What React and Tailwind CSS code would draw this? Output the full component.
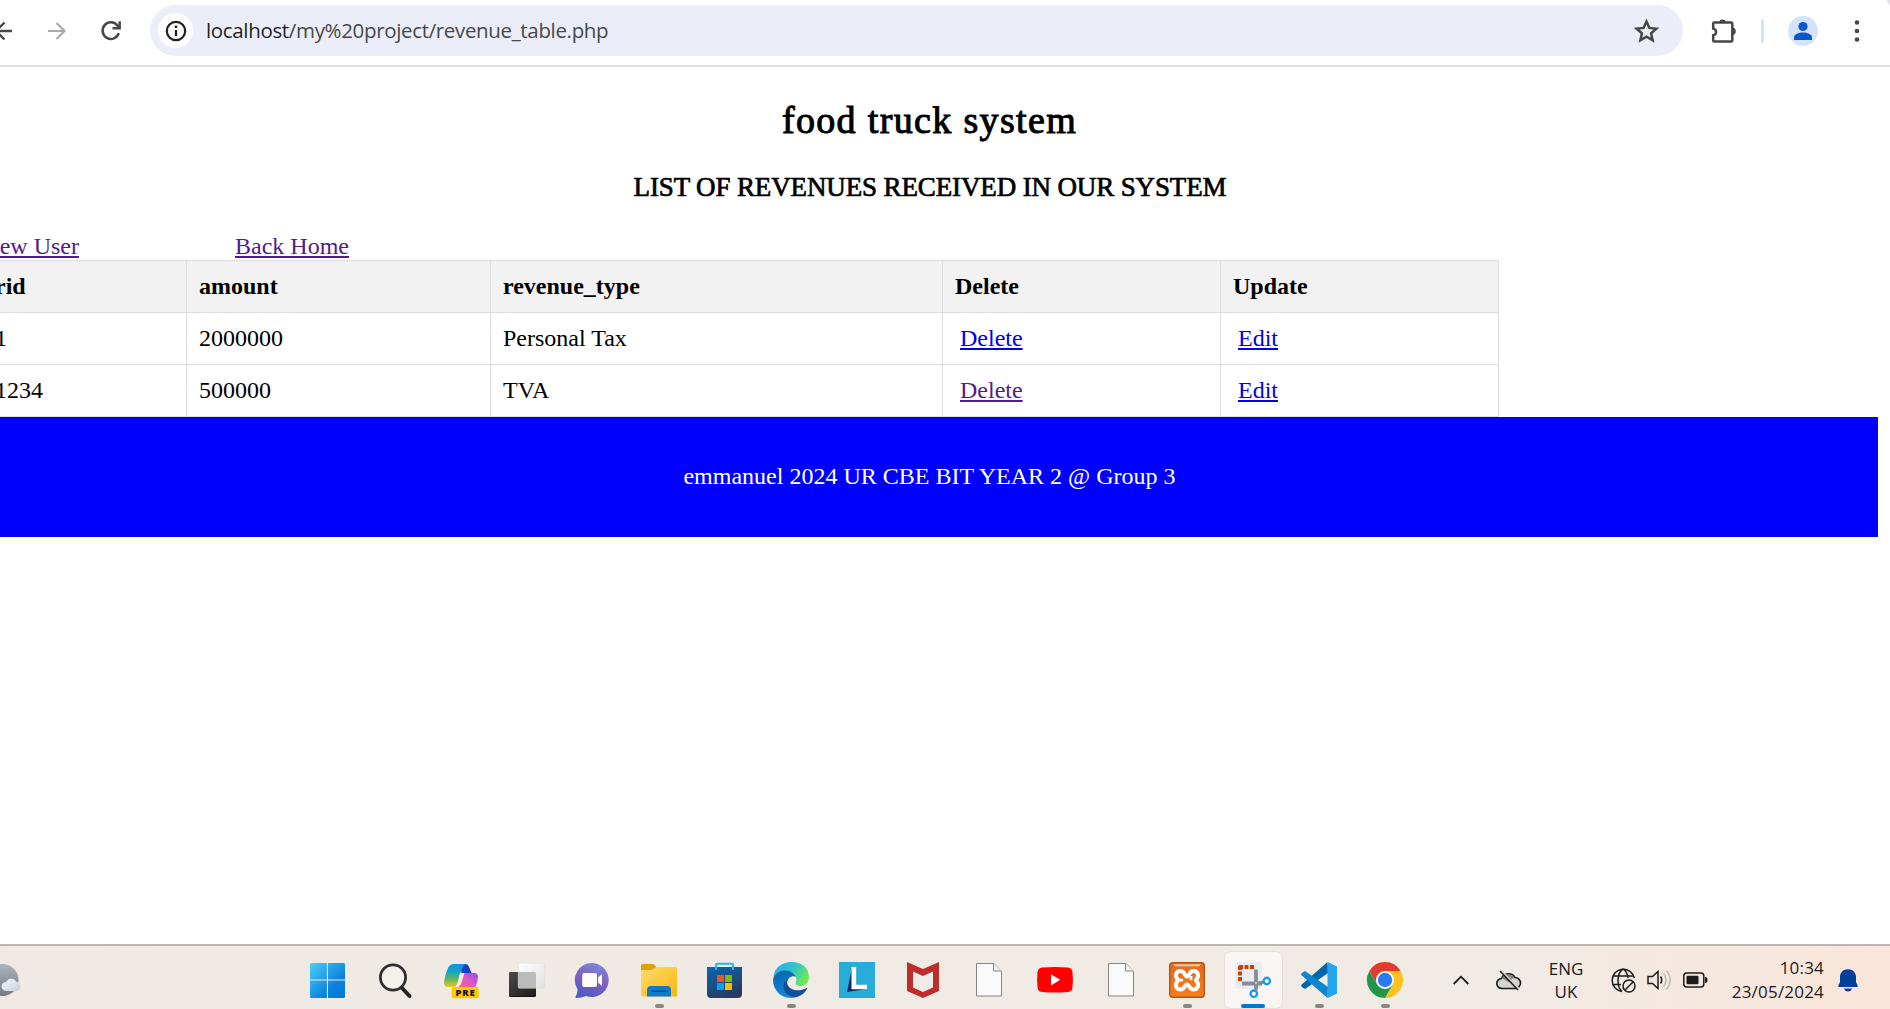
import React from "react";

const Svg = ({ children, className = "", ...p }) => (
  <svg className={"block shrink-0 overflow-visible " + className} fill="none" {...p}>{children}</svg>
);

function Toolbar() {
  return (
    <header className="relative flex h-[67px] items-start border-b-2 border-[#dfdfdf] bg-white">
      <div className="flex h-[61px] w-[150px] shrink-0 items-center">
        <Svg width="16" height="22" viewBox="0 0 16 22" stroke="#474747" strokeWidth="2.3">
          <path d="M12 11H-5M4.500 2.500L-4 11l8.500 8.500" />
        </Svg>
        <Svg className="ml-8" width="18" height="18" viewBox="0 0 18 18" stroke="#ababab" strokeWidth="2.2">
          <path d="M0 9H16M8.500 1l8 8-8 8" />
        </Svg>
        <Svg className="ml-[35px]" width="20" height="20" viewBox="0 0 20 20" stroke="#474747" strokeWidth="2.5">
          <path d="M17.800 12.200A8.300 8.300 0 1 1 16.500 4.600L18 6.200" />
          <path d="M18.700 0.300V7.300H11.500" strokeWidth="2.400" />
        </Svg>
      </div>
      <div className="mt-[5px] flex h-[51px] w-[1533px] shrink-0 items-center rounded-full bg-[#ebeef8] pl-2 pr-6">
        <span className="flex size-[35px] items-center justify-center rounded-full bg-white">
          <Svg width="22" height="22" viewBox="0 0 22 22">
            <circle cx="11" cy="11" r="9.200" stroke="#1f1f1f" strokeWidth="2.200" />
            <path d="M11 10v6" stroke="#1f1f1f" strokeWidth="2.300" />
            <circle cx="11" cy="6.800" r="1.400" fill="#1f1f1f" />
          </Svg>
        </span>
        <span className="ml-[13px] whitespace-nowrap font-['Open_Sans',sans-serif] text-[20.500px] tracking-[-0.340px] text-[#474747]">
          <span className="text-[#1f1f1f]">localhost</span>/my%20project/revenue_table.php
        </span>
        <Svg className="ml-auto" width="25" height="24" viewBox="0 0 25 24">
          <path d="M12.500 2.500l2.900 6.400 7 .7-5.300 4.700 1.500 6.900-6.100-3.600-6.100 3.600 1.500-6.900L2.600 9.600l7-.7z" stroke="#474747" strokeWidth="2.500" />
        </Svg>
      </div>
      <div className="flex h-[61px] items-center">
        <Svg className="ml-7" width="26" height="26" viewBox="0 0 26 26">
          <path d="M3 4.500H20.300Q21.300 4.500 21.300 5.500V22.500Q21.300 23.500 20.300 23.500H3.200Q2.200 23.500 2.200 22.500V17.300C6 16.500 6 11.500 2.200 10.500V5.500Q2.200 4.500 3 4.500Z" stroke="#474747" strokeWidth="2.500" />
          <path d="M8 4a3.600 3.200 0 0 1 7 0zM22 9.500a3.300 3.800 0 0 1 0 7.500z" fill="#474747" />
        </Svg>
        <span className="ml-6 h-6 w-[3px] rounded bg-[#d3e3fd]" />
        <Svg className="ml-6" width="30" height="30" viewBox="0 0 30 30">
          <circle cx="15" cy="15" r="15" fill="#d3e3fd" />
          <circle cx="15" cy="10.500" r="4.600" fill="#0b57d0" />
          <path d="M6 24v-2.500c0-3.500 5-5 9-5s9 1.500 9 5V24z" fill="#0b57d0" />
        </Svg>
        <Svg className="ml-9" width="6" height="22" viewBox="0 0 6 22">
          <g fill="#474747"><circle cx="3" cy="2.500" r="2.300" /><circle cx="3" cy="11" r="2.300" /><circle cx="3" cy="19.500" r="2.300" /></g>
        </Svg>
      </div>
      <Svg className="absolute right-0 top-0" width="4" height="7" viewBox="0 0 4 7"><path d="M0 0h4v7Q3 2 0 0z" fill="#dfe1e6" /></Svg>
    </header>
  );
}

const rows = [
  { id: "1", amount: "2000000", type: "Personal Tax", visited: false },
  { id: "1234", amount: "500000", type: "TVA", visited: true },
];
const cell = "border border-[#dddddd] p-0 pb-[2px] pl-3 text-left";

function Page() {
  return (
    <main className="h-[877px] overflow-hidden bg-white font-['Liberation_Serif',serif] text-[24px] leading-[28px] text-black">
      <h1 className="mr-[31px] mt-[31px] text-center text-[38px] leading-[44px] tracking-[1.35px] [-webkit-text-stroke:1px_black]">food truck system</h1>
      <h2 className="mr-[30px] mt-[30px] text-center text-[27px] leading-[30px] tracking-[-0.130px] [-webkit-text-stroke:0.7px_black]">LIST OF REVENUES RECEIVED IN OUR SYSTEM</h2>
      <nav className="mt-[30px] flex h-[28px] text-[#551a8b]">
        <span className="flex w-[79px] justify-end whitespace-nowrap"><a className="underline decoration-2 underline-offset-2">New User</a></span>
        <a className="ml-[156px] underline decoration-2 underline-offset-2">Back Home</a>
      </nav>
      <table className="-ml-[18px] w-[1517px] table-fixed border-collapse">
        <colgroup><col className="w-[204px]" /><col className="w-[304px]" /><col className="w-[452px]" /><col className="w-[278px]" /><col className="w-[278px]" /></colgroup>
        <thead>
          <tr className="h-[52px] bg-[#f2f2f2]">
            {["rid", "amount", "revenue_type", "Delete", "Update"].map((h) => <th key={h} className={cell + " font-bold"}>{h}</th>)}
          </tr>
        </thead>
        <tbody>
          {rows.map((r) => (
            <tr key={r.id} className="h-[52px]">
              <td className={cell}>{r.id}</td>
              <td className={cell}>{r.amount}</td>
              <td className={cell}>{r.type}</td>
              <td className={cell}><a className={"ml-[5px] underline decoration-2 underline-offset-2 " + (r.visited ? "text-[#551a8b]" : "text-[#0000ee]")}>Delete</a></td>
              <td className={cell}><a className="ml-[5px] text-[#0000ee] underline decoration-2 underline-offset-2">Edit</a></td>
            </tr>
          ))}
        </tbody>
      </table>
      <footer className="mr-3 flex h-[120px] items-center justify-center bg-[#0000ff] pb-[2px] text-white">
        <p className="ml-[-19px]">emmanuel 2024 UR CBE BIT YEAR 2 @ Group 3</p>
      </footer>
    </main>
  );
}

const Doc = () => (
  <>
    <path d="M5.500 1.500h17.500l7.500 8v24.500h-25z" fill="#fafafa" stroke="#858585" />
    <path d="M22.500 1.500v7.500h8" fill="#f2f2f2" stroke="#858585" />
  </>
);

const icons = [
  { name: "start", art: <>
    <defs><linearGradient id="win" x1="-1" y1="1" x2="34" y2="36" gradientUnits="userSpaceOnUse"><stop stopColor="#4ccfff" /><stop offset=".65" stopColor="#0c83dc" /><stop offset="1" stopColor="#0078d4" /></linearGradient></defs>
    <path d="M.5 1H15.900V17.400H-1V2.500Q-1 1 .5 1zM17 1H32.500Q34 1 34 2.500V17.400H17zM-1 18.500H15.900V36H.5Q-1 36-1 34.500zM17 18.500H34V34.500Q34 36 32.500 36H17z" fill="url(#win)" />
  </> },
  { name: "search", art: <>
    <circle cx="16" cy="15.500" r="12.600" fill="#f4f1ed" stroke="#303030" strokeWidth="2.800" />
    <path d="M25 26l7.500 8" stroke="#252525" strokeWidth="4" strokeLinecap="round" />
  </> },
  { name: "copilot", art: <>
    <defs>
      <linearGradient id="cp1" x1="0" y1="0" x2="0" y2="1"><stop stopColor="#1490e8" /><stop offset=".35" stopColor="#16a5c4" /><stop offset=".65" stopColor="#5cb85f" /><stop offset="1" stopColor="#f5c518" /></linearGradient>
      <linearGradient id="cp2" x1="1" y1="0" x2="0" y2="1"><stop stopColor="#8d4cf0" /><stop offset=".5" stopColor="#df59c6" /><stop offset="1" stopColor="#ff7046" /></linearGradient>
    </defs>
    <path d="M17 2h5q3 0 4 3l2.500 6h-10z" fill="#1440c8" />
    <path d="M11 2h12q-3.500 1.500-4.500 6L14 22q-1 3-4 3H5q-4 0-4-5Q2 12 5 6 7 2 11 2z" fill="url(#cp1)" />
    <path d="M20 11h11q4 0 4 4-.5 6-3 11h-18q2-.5 3-4z" fill="url(#cp2)" />
    <path d="M17 11h4.500l-3.500 11q-1 2-3 2h-2q1-1 1.500-3z" fill="#f3eeea" />
    <rect x="8.700" y="25" width="27" height="11.200" rx="2" fill="#ffc800" />
    <text x="22.600" y="33.800" textAnchor="middle" fill="#161616" className="font-['Open_Sans',sans-serif] text-[9.500px] font-extrabold tracking-[.8px]">PRE</text>
  </> },
  { name: "taskview", art: <>
    <defs><linearGradient id="tv" x1="0" y1="0" x2="1" y2="1"><stop stopColor="#4a4a4a" /><stop offset="1" stopColor="#1c1c1c" /></linearGradient><linearGradient id="tw" x1="0" y1="0" x2="1" y2="1"><stop stopColor="#fff" /><stop offset="1" stopColor="#e2e2e5" /></linearGradient></defs>
    <rect y="10" width="27" height="25" rx="1.500" fill="#151515" /><rect y="10" width="27" height="24" rx="1.500" fill="url(#tv)" />
    <rect x="9.200" y="1.200" width="26.500" height="25" rx="1.500" fill="url(#tw)" stroke="#d8d7d9" strokeWidth=".5" />
    <path d="M9 10h16.500q1.500 0 1.500 1.500V26H10.500q-1.500 0-1.500-1.500z" fill="#bcbcbc" />
  </> },
  { name: "chat", art: <>
    <defs><linearGradient id="ch" x1=".75" y1="0" x2=".4" y2="1"><stop stopColor="#7390e5" /><stop offset=".45" stopColor="#8263b8" /><stop offset="1" stopColor="#5059c9" /></linearGradient></defs>
    <path d="M17.500 1A17 17 0 1 1 11 34Q7 36 1 36 0 35 .8 34 2.500 32 2.500 27A17 17 0 0 1 17.500 1z" fill="url(#ch)" />
    <rect x="7.200" y="11" width="14.800" height="14" rx="2" fill="#fff" /><path d="M23 15.500l4-3.500v12l-4-3.500z" fill="#fff" />
  </> },
  { name: "files", run: true, art: <>
    <defs><linearGradient id="fo" x1="0" y1="0" x2="1" y2="1"><stop stopColor="#ffdc70" /><stop offset="1" stopColor="#fbb70a" /></linearGradient></defs>
    <path d="M0 3.500Q0 2 1.500 2H11q1.500 0 2.500 1l2 2-4 4H0z" fill="#dfa00c" />
    <path d="M0 9.500q0-1.500 1.500-1.500H9q2 0 4-1.500l1-.5q1-1 2.500-1h18q1.500 0 1.500 1.500V34.500H1.500Q0 34.500 0 33z" fill="url(#fo)" />
    <path d="M6 34.500V28q0-4 4-4h16q4 0 4 4v6.500z" fill="#1279c6" /><path d="M11 29.200h14" stroke="#074d92" strokeWidth="1.500" strokeLinecap="round" />
  </> },
  { name: "store", art: <>
    <defs><linearGradient id="st" x1="0" y1="0" x2=".5" y2="1"><stop stopColor="#0a66b3" /><stop offset="1" stopColor="#263b61" /></linearGradient></defs>
    <path d="M0 5h35v27q0 4-4 4H4q-4 0-4-4z" fill="url(#st)" />
    <path d="M9 8V3q0-1.200 1.200-1.200h14.600Q26 1.800 26 3v5" stroke="#22b7ee" strokeWidth="2" /><path d="M10 3h15v2H10z" fill="#eef3f5" />
    <path d="M10 13h7v7h-7z" fill="#f25022" /><path d="M18 13h7v7h-7z" fill="#7fba00" /><path d="M10 21h7v7h-7z" fill="#00a4ef" /><path d="M18 21h7v7h-7z" fill="#ffb900" />
  </> },
  { name: "edge", run: true, art: <>
    <defs><linearGradient id="eg" x1="0" y1=".2" x2="1" y2=".6"><stop stopColor="#2bb0ee" /><stop offset=".5" stopColor="#2fc3cf" /><stop offset="1" stopColor="#72ea50" /></linearGradient><linearGradient id="eb" x1=".2" y1="0" x2=".4" y2="1"><stop stopColor="#0b64a8" /><stop offset="1" stopColor="#1389e2" /></linearGradient></defs>
    <path d="M.5 15C2-5 36-5 36 15c0 6-4 9-8.500 9-3 0-5-1-5-2.500 0-1 1-2 1-4C23.500 13 19 9 13 9 7 9 3 11 .5 15z" fill="url(#eg)" />
    <path d="M0 18C1 11 7 8.500 12 8.500c6 0 10 3.500 11.500 7-2-2.500-9-1.500-9.500 5.500-.4 6 4 12 10 14C10 39 0 29 0 18z" fill="url(#eb)" />
    <path d="M15.500 16.500C5 23 12 36 24 35c5-1.500 8-4.500 10-8 .3-1-.5-1.200-1-.8C24 31 14 27 14 20q0-2 1.500-3.500z" fill="#124f98" />
  </> },
  { name: "l", art: <>
    <path d="M0 0h36v36H0z" fill="#28add8" /><path d="M13 6L8 30l20-3-14-4z" fill="#0a2b64" /><path d="M12.500 5h4.700v17.700H28v4.600H12.500z" fill="#fff" />
  </> },
  { name: "mcafee", art: <path fillRule="evenodd" d="M2 0l16 7L34 0v29L18 36 2 29zM8 9.500v16L18 30l10-4.500v-16L18 14z" fill="#bd2d2b" /> },
  { name: "doc1", art: <Doc /> },
  { name: "youtube", art: <>
    <path d="M5 5.500q13-1 26 0 4 .5 4.500 4.500.8 8 0 15.500-.5 4-4.500 4.500-13 1-26 0-4-.5-4.500-4.500-.8-7.500 0-15.500Q1 6 5 5.500z" fill="#f00" /><path d="M14 12.200v11.200l9.300-5.600z" fill="#fff" />
  </> },
  { name: "doc2", art: <Doc /> },
  { name: "xampp", run: true, art: <>
    <defs><linearGradient id="xa" x1="0" y1="0" x2="0" y2="1"><stop stopColor="#dc6b22" /><stop offset="1" stopColor="#fb7d1c" /></linearGradient></defs>
    <rect x=".7" y=".7" width="34.600" height="34.600" rx="3" fill="url(#xa)" stroke="#b9530f" strokeWidth="1.400" /><path d="M4 2h28l-2 2.500H6z" fill="#f3b991" />
    <path d="M18 14.500C15.500 14.500 16 9 11.500 9 7 9 5.500 14 8.500 17.200q1 1 0 2C5.500 22.500 7 27.500 11.500 27.500c4.500 0 4-5 6.500-5s2 5 6.500 5 6-5 3-8.300q-1-1 0-2C30.500 14 29 9 24.500 9 20 9 20.500 14.500 18 14.500z" stroke="#fff" strokeWidth="4" strokeLinejoin="round" />
    <path d="M8.500 18.200H14M22 14v4.200" stroke="#fff" strokeWidth="2.800" />
  </> },
  { name: "snip", active: true, art: <>
    <rect x="0" y="0" width="27" height="27" rx="3" fill="#e8edf1" />
    <path d="M5 3h3v4H7v1H3V5q0-2 2-2zM9.500 3h4v4h-4zM15 3h4v4h-4zM3 9.500h4v4H3zM3 15h4v4H3z" fill="#d83b01" />
    <path d="M21 7.500V27M7 21.500h20" stroke="#858c93" strokeWidth="3.800" /><circle cx="21" cy="21" r="1" fill="#ddd" />
    <path d="M24 21l5-1M21 24v5" stroke="#858c93" strokeWidth="3" /><circle cx="31.800" cy="19" r="3.200" fill="#fff" stroke="#1b9de2" strokeWidth="2.400" /><circle cx="18.800" cy="31.700" r="3.200" fill="#fff" stroke="#1b9de2" strokeWidth="2.400" />
  </> },
  { name: "vscode", run: true, art: <>
    <path d="M27 11L4 27 .8 25Q-.5 23.800.8 22.500L26.500 0z" fill="#0065a9" />
    <path d="M27 25L4 9 .8 11Q-.5 12.200.8 13.500L26.500 36z" fill="#0b86cf" />
    <path d="M26.500 0L36 4.500V31.500L26.500 36z" fill="#27a4ee" />
  </> },
  { name: "chrome", run: true, art: <>
    <path d="M2.400 9A18 18 0 0 1 33.600 9H18L10.200 22.500z" fill="#e33b2e" />
    <path d="M33.600 9A18 18 0 0 1 18 36L25.800 22.500 18 9z" fill="#fcc31e" />
    <path d="M18 36A18 18 0 0 1 2.400 9L10.200 22.500Q18 28 25.800 22.500z" fill="#239649" />
    <circle cx="18" cy="18" r="9" fill="#fff" /><circle cx="18" cy="18" r="7.200" fill="#2b7af0" />
  </> },
];

function Taskbar() {
  return (
    <div className="flex h-[65px] items-start overflow-hidden border-t-2 border-[#bbb7b2] bg-linear-to-r from-[#eeeae3] via-[#f1ebe6] via-[80%] to-[#fae5d9] font-['Open_Sans',sans-serif] text-[#1b1b1b]">
      <div className="h-[63px] w-[296px] shrink-0">
        <Svg width="24" height="63" viewBox="0 0 24 63">
          <defs><linearGradient id="moon" x1="0" y1="0" x2="0" y2="1"><stop stopColor="#acb4bd" /><stop offset="1" stopColor="#737a84" /></linearGradient><linearGradient id="cl" x1="0" y1="0" x2="1" y2="1"><stop stopColor="#f8fafc" /><stop offset="1" stopColor="#c4ccd6" /></linearGradient></defs>
          <circle cx="2.500" cy="34" r="16" fill="url(#moon)" />
          <path d="M6 45a4.500 4.500 0 0 1 .2-9 5.500 5.500 0 0 1 10-.2A4.700 4.700 0 0 1 17 45z" fill="url(#cl)" />
        </Svg>
      </div>
      {icons.map((i) => (
        <div key={i.name} className="flex h-[63px] w-[66px] shrink-0 justify-center">
          <div className={"mt-1.5 flex h-[56px] w-[57px] flex-col items-center rounded-md pt-2.5 " + (i.active ? "bg-[#f9f6f3] shadow-[0_0_0_1px_#e6e1dc]" : "")}>
            <Svg width="36" height="36" viewBox="0 0 36 36">{i.art}</Svg>
            {i.run && <span className="mt-1.5 h-1 w-[9px] shrink-0 rounded-full bg-[#8a8682]" />}
            {i.active && <span className="mt-1.5 h-1 w-6 shrink-0 rounded-full bg-[#0078d4]" />}
          </div>
        </div>
      ))}
      <div className="ml-[35px] flex h-[63px] items-center pt-[5px]">
        <Svg width="16" height="10" viewBox="0 0 16 10"><path d="M.7 9L8 1.700 15.300 9" stroke="#1b1b1b" strokeWidth="1.800" /></Svg>
        <Svg className="ml-[27px] mr-px" width="25" height="20" viewBox="0 0 25 20">
          <path d="M6 18.500A5 5 0 0 1 5.500 8.500 7.500 7.500 0 0 1 19 7.500a5.500 5.500 0 0 1 0 11z" fill="#d4d2d0" stroke="#1b1b1b" strokeWidth="1.600" />
          <path d="M6 8.500a7 7 0 0 1 12.500-.5q-3 0-4.500 4.500z" fill="#858380" /><path d="M5 .5l18 18.500" stroke="#d8d4d0" strokeWidth="2" /><path d="M4 1L22 20" stroke="#1b1b1b" strokeWidth="1.500" />
        </Svg>
        <div className="ml-6 w-[40px] text-center text-[17px] leading-[23px]">ENG<br />UK</div>
        <Svg className="ml-[25px]" width="25" height="25" viewBox="0 0 25 25" stroke="#1b1b1b" strokeWidth="1.500">
          <path d="M11 23.500A11.200 11.200 0 1 1 23.300 10M11 23.500C5.500 19 5.500 5 12 1c4 3 5 6 5 9M1.500 8h21.500M1.500 16.500H10" />
          <circle cx="18" cy="18" r="6" /><path d="M14 22l8-8" />
        </Svg>
        <Svg className="ml-[11px]" width="25" height="22" viewBox="0 0 25 22" strokeWidth="1.500">
          <path d="M1 7.500h4.500L11 2.500v17l-5.500-5H1z" stroke="#1b1b1b" /><path d="M13.500 7.500q2.500 3.500 0 7" stroke="#1b1b1b" /><path d="M16.500 4.500q5 6.500 0 13M19.500 1.500q7.500 9.500 0 19" stroke="#bdb8b3" />
        </Svg>
        <Svg className="ml-[11px]" width="25" height="16" viewBox="0 0 25 16">
          <rect x=".8" y="1" width="20" height="14" rx="3" stroke="#1b1b1b" strokeWidth="1.500" /><rect x="3.500" y="3.700" width="12" height="8.600" rx="1" fill="#1b1b1b" /><path d="M22 5q2.500 0 2.500 3T22 11z" fill="#1b1b1b" />
        </Svg>
        <div className="ml-4 w-[100px] whitespace-nowrap text-right text-[17px] leading-[24px] tracking-[.2px]">10:34<br />23/05/2024</div>
        <Svg className="ml-3.5" width="20" height="23" viewBox="0 0 20 23"><path d="M10 .3c-5 0-8 3.500-8 8V13L.3 16.500q-.5 1.500 1 1.500h17.400q1.500 0 1-1.500L18 13V8.300c0-4.500-3-8-8-8zM6 19.500q1 3 4 3t4-3z" fill="#003f98" /></Svg>
      </div>
    </div>
  );
}

export default function App() {
  return (
    <div className="flex h-[1009px] w-[1890px] flex-col overflow-hidden bg-white">
      <Toolbar />
      <Page />
      <Taskbar />
    </div>
  );
}
